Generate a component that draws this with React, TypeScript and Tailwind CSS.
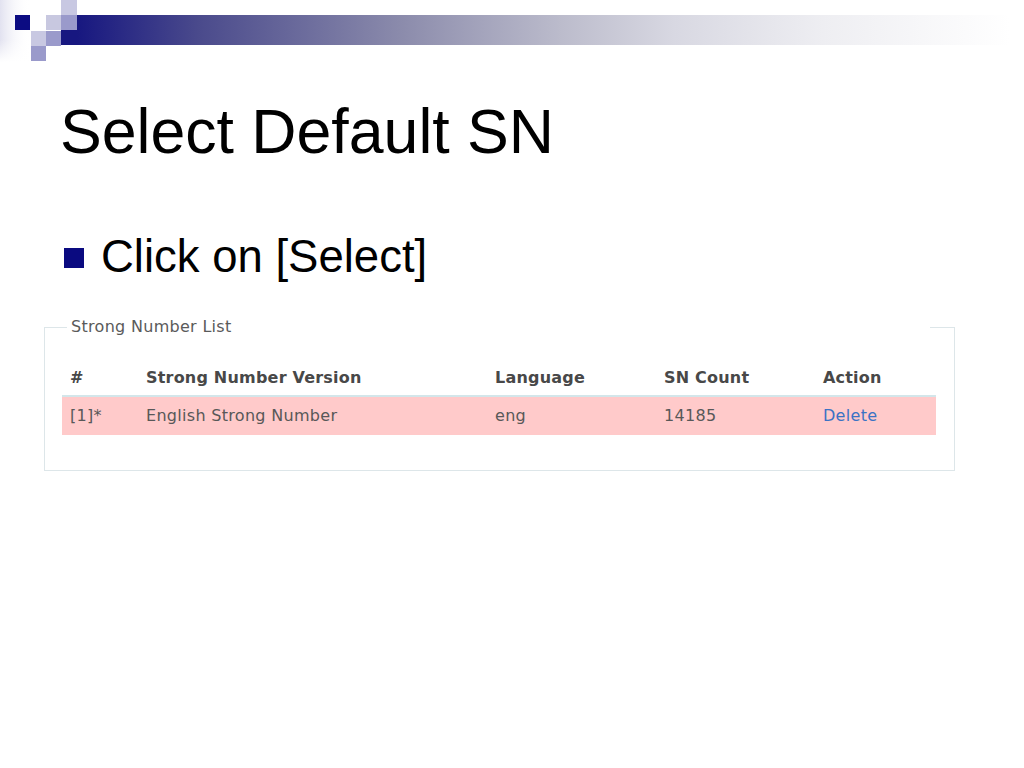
import React from "react";

function HeaderDecor() {
  return (
    <svg width="1024" height="62" viewBox="0 0 1024 62" className="block">
      <defs>
        <linearGradient id="bar" x1="77" y1="0" x2="1010" y2="0" gradientUnits="userSpaceOnUse">
          <stop offset="0" stopColor="#171780" />
          <stop offset="0.13" stopColor="#4a4a8c" />
          <stop offset="0.35" stopColor="#8c8cac" />
          <stop offset="0.52" stopColor="#bcbccc" />
          <stop offset="0.64" stopColor="#d8d8e2" />
          <stop offset="0.8" stopColor="#eeeef2" />
          <stop offset="1" stopColor="#ffffff" />
        </linearGradient>
        <linearGradient id="leftfade" x1="0" y1="0" x2="1" y2="0">
          <stop offset="0" stopColor="#e2e2f0" />
          <stop offset="1" stopColor="#ffffff" stopOpacity="0" />
        </linearGradient>
        <linearGradient id="leftfadeV" x1="0" y1="0" x2="0" y2="1">
          <stop offset="0" stopColor="#ffffff" stopOpacity="0" />
          <stop offset="1" stopColor="#ffffff" stopOpacity="1" />
        </linearGradient>
      </defs>
      <rect x="0" y="0" width="30" height="62" fill="url(#leftfade)" />
      <rect x="0" y="40" width="30" height="22" fill="url(#leftfadeV)" />
      <rect x="61" y="15" width="963" height="30" fill="url(#bar)" />
      <rect x="61" y="0" width="16" height="15" fill="#c8c8e2" />
      <rect x="15" y="15" width="15" height="15" fill="#0c0c82" />
      <rect x="46" y="15" width="15" height="15" fill="#c8c8e0" />
      <rect x="61" y="15" width="16" height="15" fill="#9a9acb" />
      <rect x="31" y="31" width="15" height="15" fill="#c8c8e2" />
      <rect x="46" y="31" width="15" height="15" fill="#9a9acb" />
      <rect x="31" y="46" width="15" height="15" fill="#9a9acb" />
    </svg>
  );
}

const cols = [
  { w: "w-[76px]", h: "#", v: "[1]*" },
  { w: "w-[349px]", h: "Strong Number Version", v: "English Strong Number" },
  { w: "w-[169px]", h: "Language", v: "eng" },
  { w: "w-[159px]", h: "SN Count", v: "14185" },
  { w: "w-[121px]", h: "Action", v: "Delete" },
];

export default function App() {
  return (
    <div className="w-[1024px] h-[768px] bg-white overflow-hidden">
      <HeaderDecor />
      <div
        className="pl-[60px] mt-[38px] text-[62.6px] leading-[62px] text-black"
        style={{ fontFamily: '"Liberation Sans", Arial, sans-serif' }}
      >
        Select Default SN
      </div>
      <div
        className="flex items-start mt-[72px] pl-[64px]"
        style={{ fontFamily: '"Liberation Sans", Arial, sans-serif' }}
      >
        <div className="w-[20px] h-[20px] bg-[#0a0a80] mt-[14px]" />
        <div className="ml-[17px] text-[45.5px] leading-[45px] text-black">Click on [Select]</div>
      </div>

      <div
        className="flex flex-col ml-[44px] mt-[48px] w-[911px] border-x border-b border-[#dde6e9] pl-[17px] pr-[18px] pb-[35px]"
        style={{ fontFamily: '"DejaVu Sans", Verdana, sans-serif' }}
      >
        <div className="flex items-start h-[18px] -mt-[9px] -ml-[18px] -mr-[19px]">
          <div className="w-[23px] h-px mt-[9px] bg-[#dde6e9]" />
          <div className="pl-[4px] text-[16px] leading-[18px] tracking-[0.3px] text-[#5a5a5a]">
            Strong Number List
          </div>
          <div className="flex-1" />
          <div className="w-[25px] h-px mt-[9px] bg-[#dde6e9]" />
        </div>
        <div className="flex items-center h-[35px] mt-[24px]">
          {cols.map((c) => (
            <div
              key={c.h}
              className={`${c.w} pl-[8px] text-[16px] font-bold tracking-[0.2px] text-[#484848]`}
            >
              {c.h}
            </div>
          ))}
        </div>
        <div className="flex items-center h-[40px] border-t-2 border-[#d3e6ea] bg-[#ffcaca]">
          {cols.map((c) => (
            <div
              key={c.h}
              className={`${c.w} pl-[8px] text-[16px] tracking-[0.3px] ${
                c.h === "Action" ? "text-[#3b72c4]" : "text-[#585858]"
              }`}
            >
              {c.v}
            </div>
          ))}
        </div>
      </div>
    </div>
  );
}
